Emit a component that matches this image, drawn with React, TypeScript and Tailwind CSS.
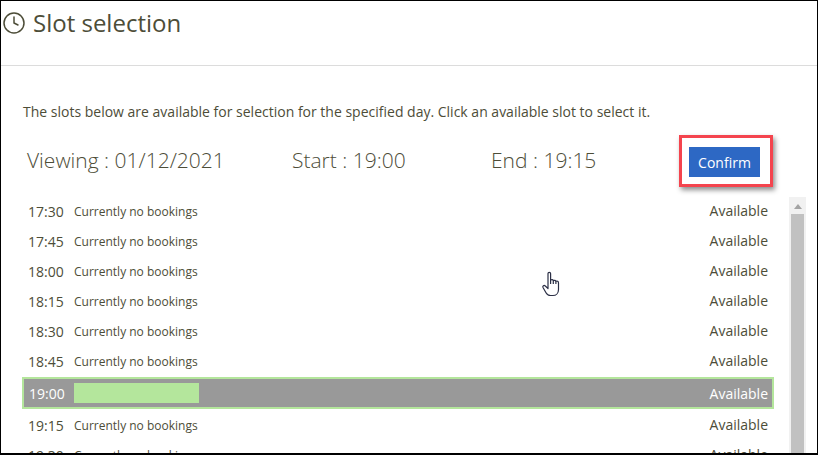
import { Clock } from "lucide-react";

const earlierSlots = ["17:30", "17:45", "18:00", "18:15", "18:30", "18:45"];
const laterSlots = ["19:15", "19:30"];

function SlotRow({ time }: { time: string }) {
  return (
    <div className="flex h-[30px] shrink-0 items-center justify-between pl-[6px] pr-[6px]">
      <div className="flex items-center">
        <span className="w-[46px] pb-[1px] text-[14px]">{time}</span>
        <span className="text-[12px]">Currently no bookings</span>
      </div>
      <span className="pb-[4px] text-[14px]">Available</span>
    </div>
  );
}

function HandCursor() {
  return (
    <svg className="absolute left-[540px] top-[270px]" width="20" height="27" viewBox="0 0 20 27" fill="#fff" stroke="#2b2f45" strokeWidth="1.2" strokeLinejoin="round">
      <path d="M7 2.500c0-1.600 2.600-1.600 2.600 0V9c1.500-.5 2.400-.3 2.700.6 1.200-.6 2.300-.3 2.600.7 1.300-.5 2.600.1 2.600 1.600v6.500c0 3.600-2.400 6.100-5.600 6.100h-2.400c-2.300 0-3.600-1-4.500-2.800L2 16.500c-.7-1.500 1-2.700 2.300-1.500L7 17.500z" />
      <path d="M12.300 9.600V13M14.900 10.300V13M9.600 9V13" fill="none" />
    </svg>
  );
}

export default function App() {
  return (
    <div className="relative flex h-[455px] w-[818px] flex-col overflow-hidden border-b-2 border-l border-r border-t border-black bg-white font-['Open_Sans',sans-serif] text-[#4d4d38]">
      <header className="flex h-[65px] shrink-0 items-start gap-[7px] border-b border-[#dcdcdc] pl-[1px] pt-[7px]">
        <Clock className="mt-[3px] h-[24px] w-[24px]" strokeWidth={1.5} />
        <h1 className="text-[24px] leading-[30px]">Slot selection</h1>
      </header>

      <div className="flex min-h-0 flex-1 flex-col pl-[21px] pr-[11px]">
        <p className="ml-[1px] mt-[36px] text-[14px] leading-[20px]">
          The slots below are available for selection for the specified day. Click an available slot to select it.
        </p>

        <div className="mt-[14px] flex h-[50px] shrink-0 items-center pl-[5px] text-[21px] font-light">
          <span className="w-[265px]">Viewing : 01/12/2021</span>
          <span className="w-[199px]">Start : 19:00</span>
          <span className="w-[188px]">End : 19:15</span>
          <div className="flex h-[52px] w-[94px] shrink-0 items-center justify-center border-[3px] border-[#f4444e] shadow-[2px_3px_5px_rgba(0,0,0,0.45)]">
            <button type="button" className="mr-[3px] mt-[2px] h-[30px] w-[71px] bg-[#2d68c4] text-[14px] font-medium text-white">
              Confirm
            </button>
          </div>
        </div>

        <div className="mt-[11px] flex min-h-0 flex-1 gap-[15px]">
          <div className="flex w-[753px] flex-col overflow-hidden">
            {earlierSlots.map((time) => (
              <SlotRow key={time} time={time} />
            ))}
            <div className="flex h-[32px] shrink-0 items-center justify-between border-2 border-[#b4e69c] bg-[#999999] pl-[5px] pr-[4px] font-medium text-white">
              <div className="flex items-center">
                <span className="w-[45px] text-[14px]">19:00</span>
                <span className="h-[20px] w-[125px] bg-[#b4e69c]" />
              </div>
              <span className="text-[14px]">Available</span>
            </div>
            <div className="mt-[2px]">
              {laterSlots.map((time) => (
                <SlotRow key={time} time={time} />
              ))}
            </div>
          </div>
          <div className="flex w-[17px] shrink-0 flex-col items-center bg-[#f1f1f1] px-[2px]">
            <span className="mb-[5px] mt-[7px] h-0 w-0 border-x-[4px] border-b-[5px] border-x-transparent border-b-[#a3a3a3]" />
            <span className="w-full flex-1 bg-[#c1c1c1]" />
          </div>
        </div>
      </div>

      <HandCursor />
    </div>
  );
}
